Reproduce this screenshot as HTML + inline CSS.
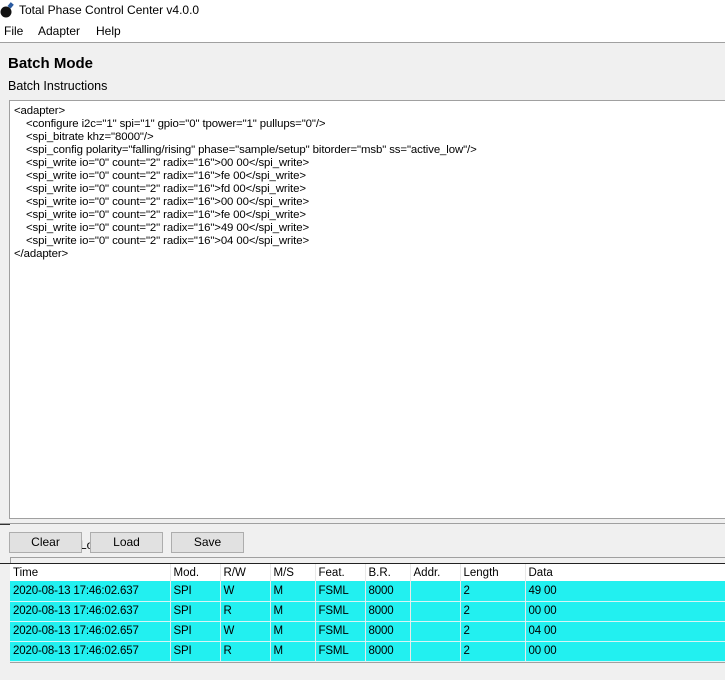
<!DOCTYPE html>
<html><head><style>
*{margin:0;padding:0;box-sizing:border-box}
body{width:725px;height:680px;background:#f0f0f0;font-family:"Liberation Sans",sans-serif;position:relative;overflow:hidden;color:#000}
.a{position:absolute;white-space:nowrap}
#title{left:0;top:0;width:725px;height:21px;background:#fff}
#menu{left:0;top:21px;width:725px;height:22px;background:#fff;border-bottom:1px solid #a0a0a0}
#ta{left:9px;top:100px;width:720px;height:419px;background:#fff;border:1px solid #a0a0a0}
#ta div{font-size:11.4px;line-height:13px;position:absolute;left:4px;top:4px;letter-spacing:-0.1px;white-space:nowrap}
#ta div p{padding-left:12px}
#ta div p.n{padding-left:0}
.btn{height:21px;background:#e1e1e1;border:1px solid #adadad;font-size:12px;text-align:center;line-height:19px}
table{border-collapse:collapse;font-size:11.5px;position:absolute;left:10px;top:564px;width:720px;letter-spacing:-0.15px}
td{height:19px;padding:0 0 0 3px;border-right:1px solid #e8e8e8;border-bottom:1px solid #d6f5f5;white-space:nowrap}
tr.h td{background:#fff;border-bottom:none;height:17px;letter-spacing:0}
tr.r td{background:#22f0f0;height:20px}
</style></head><body>
<div class="a" id="title"></div>
<svg class="a" style="left:0;top:2px" width="16" height="16"><circle cx="6" cy="10" r="5.5" fill="#111"/><rect x="9" y="1" width="4" height="5" transform="rotate(40 11 3)" fill="#2a5aa0"/></svg>
<div class="a" style="left:19px;top:3px;font-size:12px">Total Phase Control Center v4.0.0</div>
<div class="a" id="menu"></div>
<div class="a" style="left:4px;top:24px;font-size:12px">File</div>
<div class="a" style="left:38px;top:24px;font-size:12px">Adapter</div>
<div class="a" style="left:96px;top:24px;font-size:12px">Help</div>
<div class="a" style="left:8px;top:55px;font-size:15px;font-weight:bold">Batch Mode</div>
<div class="a" style="left:8px;top:79px;font-size:12.5px">Batch Instructions</div>
<div class="a" id="ta"><div>
<p class="n">&lt;adapter&gt;</p>
<p>&lt;configure i2c="1" spi="1" gpio="0" tpower="1" pullups="0"/&gt;</p>
<p>&lt;spi_bitrate khz="8000"/&gt;</p>
<p>&lt;spi_config polarity="falling/rising" phase="sample/setup" bitorder="msb" ss="active_low"/&gt;</p>
<p>&lt;spi_write io="0" count="2" radix="16"&gt;00 00&lt;/spi_write&gt;</p>
<p>&lt;spi_write io="0" count="2" radix="16"&gt;fe 00&lt;/spi_write&gt;</p>
<p>&lt;spi_write io="0" count="2" radix="16"&gt;fd 00&lt;/spi_write&gt;</p>
<p>&lt;spi_write io="0" count="2" radix="16"&gt;00 00&lt;/spi_write&gt;</p>
<p>&lt;spi_write io="0" count="2" radix="16"&gt;fe 00&lt;/spi_write&gt;</p>
<p>&lt;spi_write io="0" count="2" radix="16"&gt;49 00&lt;/spi_write&gt;</p>
<p>&lt;spi_write io="0" count="2" radix="16"&gt;04 00&lt;/spi_write&gt;</p>
<p class="n">&lt;/adapter&gt;</p>
</div></div>
<div class="a" style="left:0;top:523px;width:725px;height:1px;background:#a0a0a0"></div>
<div class="a" style="left:0;top:524px;width:10px;height:1px;background:#333"></div>
<div class="a" style="left:80px;top:538px;font-size:12px">Lo</div>
<div class="a btn" style="left:9px;top:532px;width:73px">Clear</div>
<div class="a btn" style="left:90px;top:532px;width:73px">Load</div>
<div class="a btn" style="left:171px;top:532px;width:73px">Save</div>
<div class="a" style="left:10px;top:557px;width:715px;height:1px;background:#a0a0a0"></div>
<div class="a" style="left:10px;top:557px;width:1px;height:106px;background:#a0a0a0"></div>
<div class="a" style="left:10px;top:662px;width:715px;height:1px;background:#a0a0a0"></div>
<table>
<colgroup><col style="width:160px"><col style="width:50px"><col style="width:50px"><col style="width:45px"><col style="width:50px"><col style="width:45px"><col style="width:50px"><col style="width:65px"><col></colgroup>
<tr class="h"><td>Time</td><td>Mod.</td><td>R/W</td><td>M/S</td><td>Feat.</td><td>B.R.</td><td>Addr.</td><td>Length</td><td>Data</td></tr>
<tr class="r"><td>2020-08-13 17:46:02.637</td><td>SPI</td><td>W</td><td>M</td><td>FSML</td><td>8000</td><td></td><td>2</td><td>49 00</td></tr>
<tr class="r"><td>2020-08-13 17:46:02.637</td><td>SPI</td><td>R</td><td>M</td><td>FSML</td><td>8000</td><td></td><td>2</td><td>00 00</td></tr>
<tr class="r"><td>2020-08-13 17:46:02.657</td><td>SPI</td><td>W</td><td>M</td><td>FSML</td><td>8000</td><td></td><td>2</td><td>04 00</td></tr>
<tr class="r"><td>2020-08-13 17:46:02.657</td><td>SPI</td><td>R</td><td>M</td><td>FSML</td><td>8000</td><td></td><td>2</td><td>00 00</td></tr>
</table>
<div class="a" style="left:0;top:563px;width:725px;height:1px;background:#222"></div>
</body></html>
